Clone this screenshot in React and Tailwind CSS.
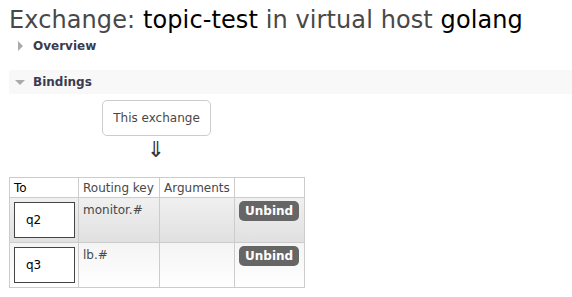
import React from "react";

const bindings = [
  { queue: "q2", key: "monitor.#", rowBg: "bg-gradient-to-b from-[#f0f0f0] to-[#e0e0e0]" },
  { queue: "q3", key: "lb.#", rowBg: "bg-gradient-to-b from-[#f4f4f4] to-[#ffffff]" },
];

const App = () => {
  return (
    <div className="min-h-screen bg-white text-[12px] text-[#484848] font-['DejaVu_Sans',Verdana,sans-serif]">
      <h1 className="pl-[9px] pt-[6px] text-[24px] leading-[28px] tracking-[0.1px] text-[#484848] font-normal">
        Exchange: <span className="text-black">topic-test</span> in virtual host{" "}
        <span className="text-black">golang</span>
      </h1>

      <div className="flex items-center h-[22px] mt-[1px] pl-[18px]">
        <span className="w-0 h-0 border-y-[5px] border-y-transparent border-l-[5px] border-l-[#aaa]" />
        <span className="ml-[10px] font-bold text-[#3b3b4f]">Overview</span>
      </div>

      <div className="mt-[13px] ml-[9px] flex items-center h-[24px] bg-[#f8f8f8] pl-[6px]">
        <span className="w-0 h-0 border-x-[5px] border-x-transparent border-t-[5px] border-t-[#aaa]" />
        <span className="ml-[8px] font-bold text-[#3b3b4f]">Bindings</span>
      </div>

      <div className="ml-[102px] mt-[6px] w-[109px] h-[36px] flex items-center justify-center border border-[#ccc] rounded-[5px]">
        This exchange
      </div>
      <div className="ml-[144px] w-[24px] text-center text-[22px] leading-[24px] mt-[2px] text-[#333]">⇓</div>

      <table className="ml-[9px] mt-[15px] border-collapse text-left">
        <thead>
          <tr className="h-[20px]">
            <th className="w-[69px] border border-[#ccc] px-[4px] font-normal text-black">To</th>
            <th className="w-[81px] border border-[#ccc] px-[4px] font-normal">Routing key</th>
            <th className="w-[75px] border border-[#ccc] px-[4px] font-normal">Arguments</th>
            <th className="w-[70px] border border-[#ccc] px-[4px] font-normal"></th>
          </tr>
        </thead>
        <tbody>
          {bindings.map((b) => (
            <tr key={b.queue} className={`h-[45px] ${b.rowBg}`}>
              <td className="border border-[#ccc] p-0 align-middle">
                <div className="ml-[4px] w-[61px] h-[36px] bg-white border border-[#444] flex items-center pl-[11px] text-black">
                  {b.queue}
                </div>
              </td>
              <td className="border border-[#ccc] px-[4px] pt-[3px] align-top">{b.key}</td>
              <td className="border border-[#ccc] px-[4px] align-top"></td>
              <td className="border border-[#ccc] px-[4px] pt-[3px] align-top">
                <button className="h-[20px] px-[6px] rounded-[5px] bg-[#666] text-white font-bold leading-[20px]">
                  Unbind
                </button>
              </td>
            </tr>
          ))}
        </tbody>
      </table>
    </div>
  );
};

export default App;
